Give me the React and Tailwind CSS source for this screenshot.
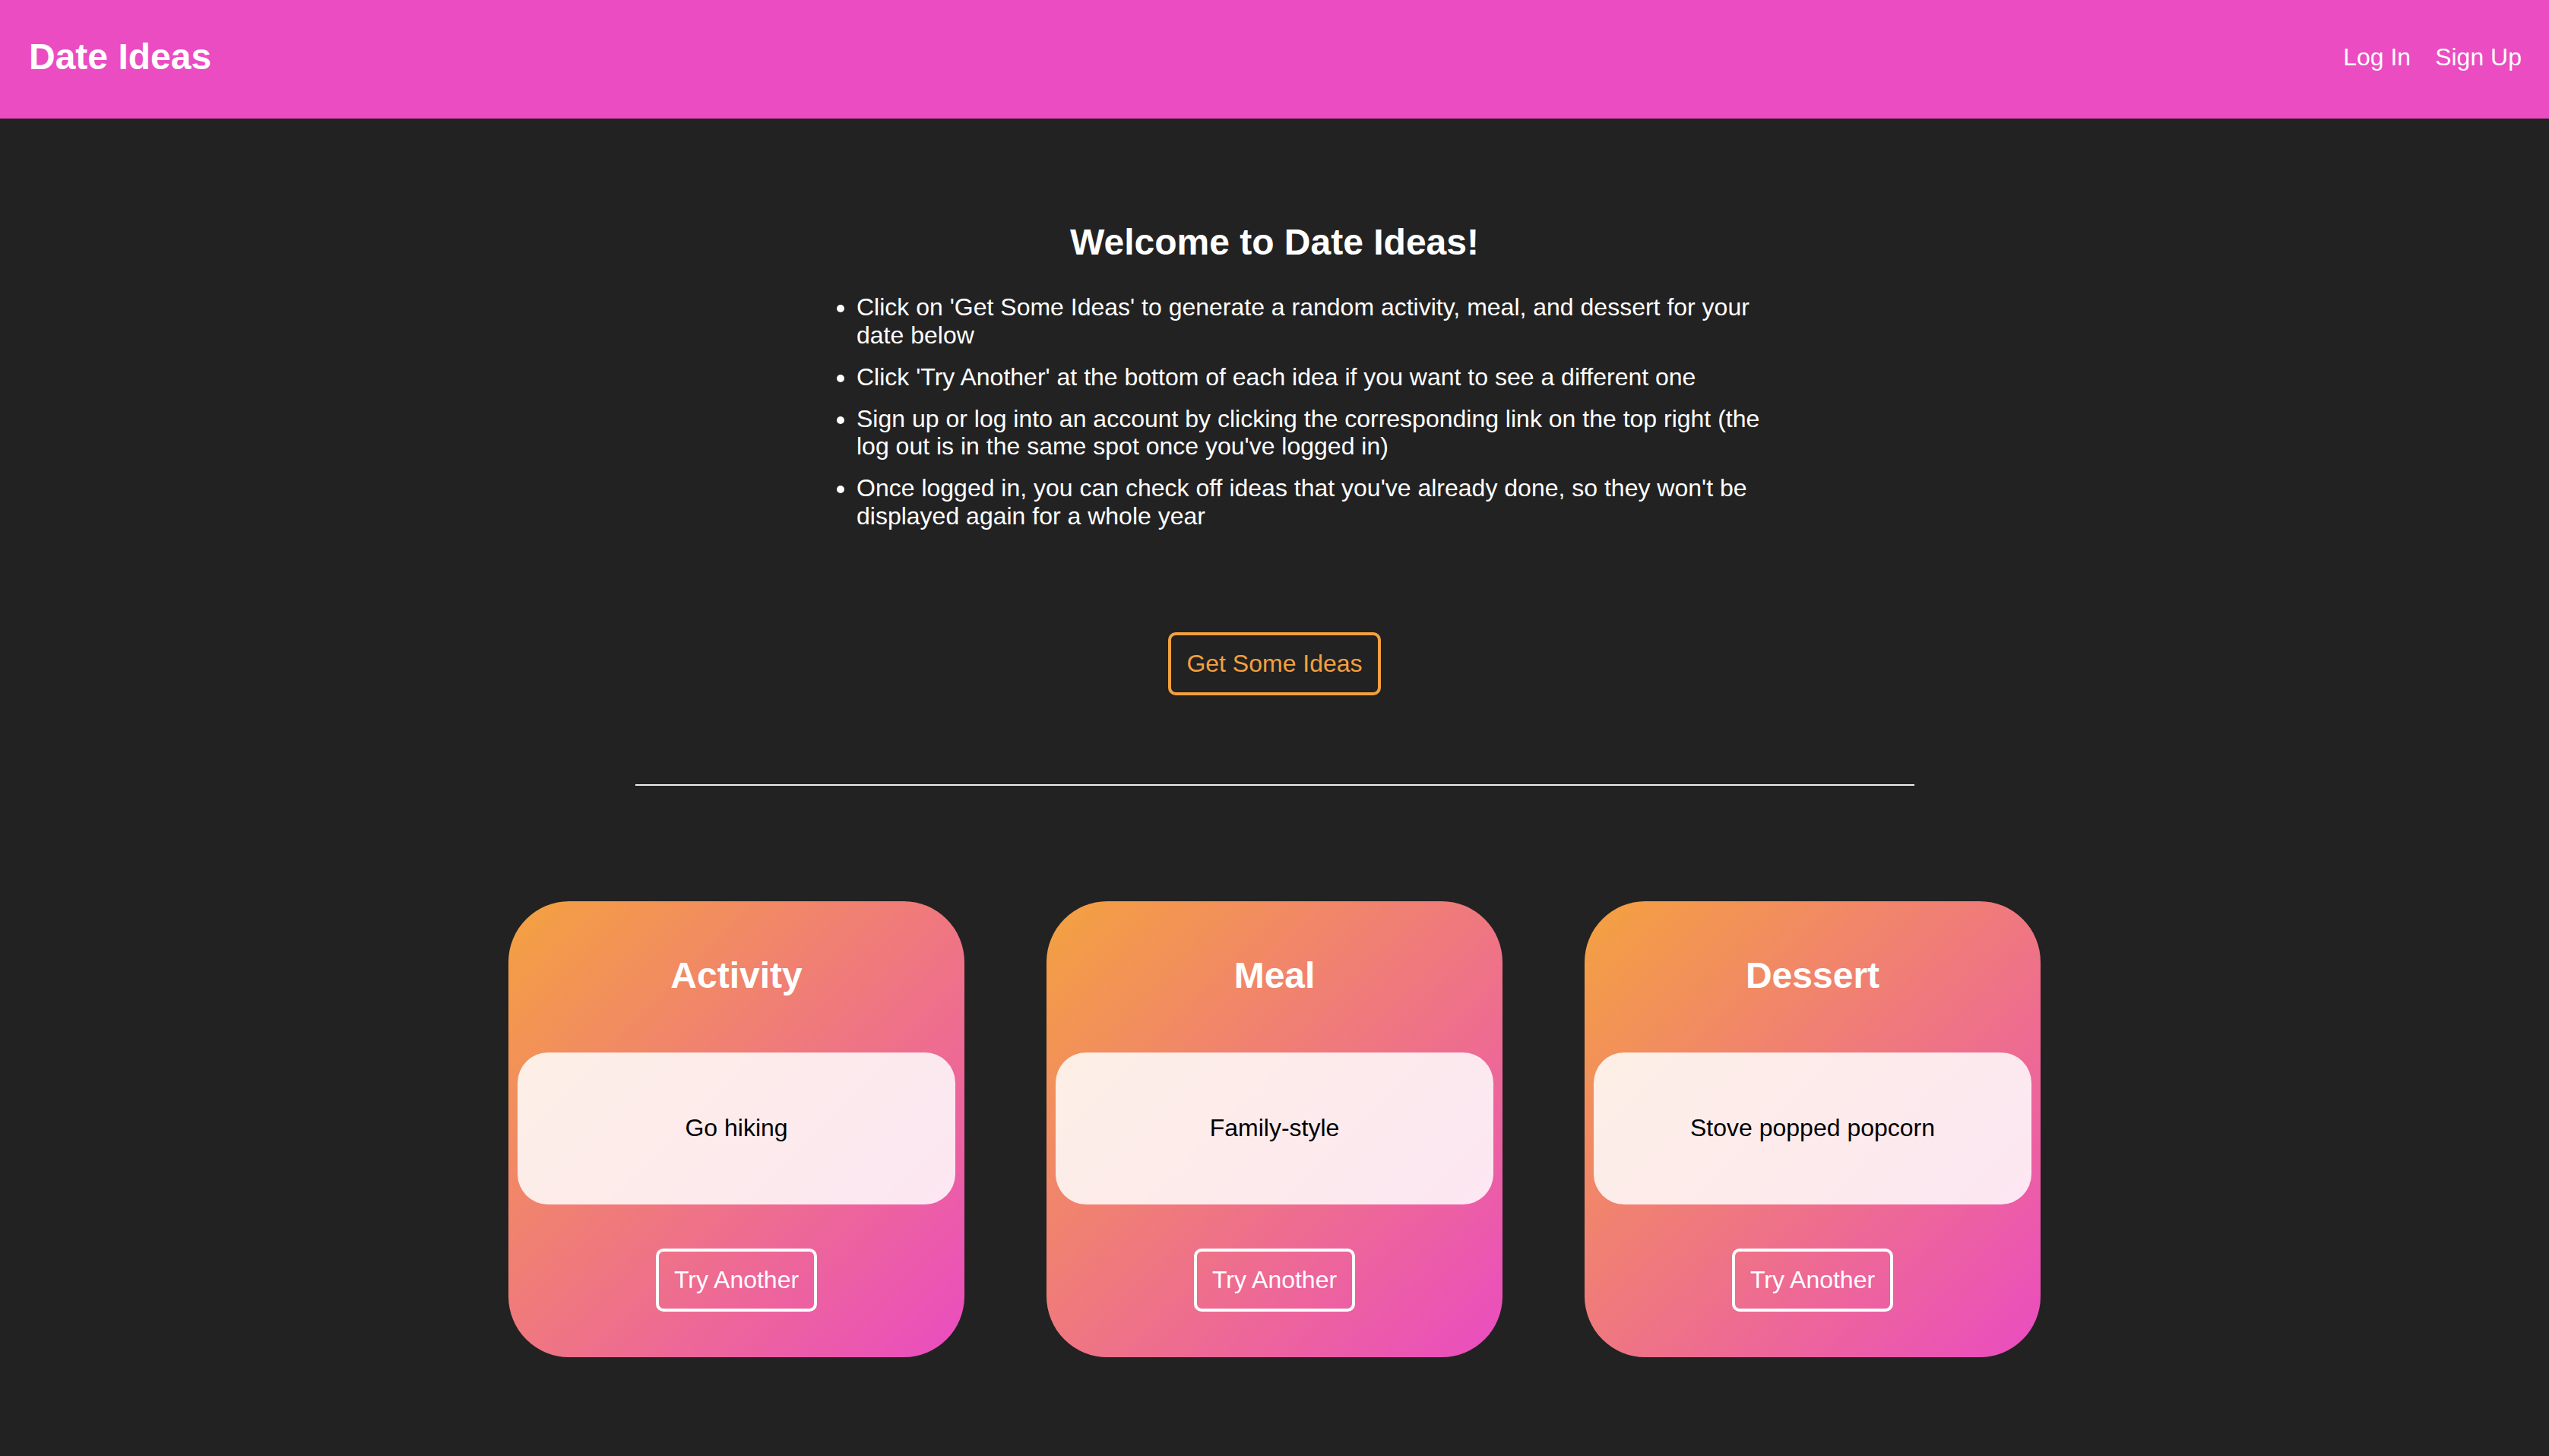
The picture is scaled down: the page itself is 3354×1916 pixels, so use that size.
import React from "react";

const cards = [
  { title: "Activity", idea: "Go hiking" },
  { title: "Meal", idea: "Family-style" },
  { title: "Dessert", idea: "Stove popped popcorn" },
];

export default function App() {
  return (
    <div className="min-h-screen bg-[#222222] font-['Liberation_Sans',Arial,Helvetica,sans-serif] text-white">
      <header className="flex h-[156px] items-center justify-between bg-[#eb4cc2] pb-[6px] pl-[38px] pr-[36px]">
        <h1 className="text-[48px] font-bold leading-[1.15]">Date Ideas</h1>
        <nav className="flex gap-[32px] text-[32px] leading-[1.15]">
          <a href="#">Log In</a>
          <a href="#">Sign Up</a>
        </nav>
      </header>

      <main className="flex flex-col items-center pb-[131px]">
        <h2 className="mt-[135px] text-[48px] font-bold leading-[1.15]">Welcome to Date Ideas!</h2>

        <div className="mt-[40px] w-[1264px] pl-[2px]">
          <ul className="-mr-[32px] list-disc pl-[80px] text-[32px] leading-[1.15]">
            <li className="mb-[18px]">
              Click on 'Get Some Ideas' to generate a random activity, meal, and dessert for your date below
            </li>
            <li className="mb-[18px]">
              Click 'Try Another' at the bottom of each idea if you want to see a different one
            </li>
            <li className="mb-[18px]">
              Sign up or log into an account by clicking the corresponding link on the top right (the log out is in the same spot once you've logged in)
            </li>
            <li>
              Once logged in, you can check off ideas that you've already done, so they won't be displayed again for a whole year
            </li>
          </ul>
        </div>

        <button className="mt-[134px] rounded-[10px] border-[4px] border-[#f3a03f] px-[20px] py-[19px] text-[32px] leading-[1.15] text-[#f3a03f]">
          Get Some Ideas
        </button>

        <hr className="mt-[117px] h-[2px] w-[1683px] border-0 bg-[#eeeeee]" />

        <div className="mt-[152px] flex gap-[108px]">
          {cards.map((c) => (
            <div
              key={c.title}
              className="flex h-[600px] w-[600px] flex-col items-center rounded-[80px] bg-[linear-gradient(135deg,#f4a23f,#ea4cc1)] pt-[70px]"
            >
              <h3 className="text-[48px] font-bold leading-[1.15] text-white">{c.title}</h3>
              <div className="mt-[74px] flex h-[200px] w-[576px] items-center justify-center rounded-[40px] bg-white/85 text-[32px] leading-[1.15] text-black">
                {c.idea}
              </div>
              <button className="mt-[58px] rounded-[10px] border-[4px] border-white px-[20px] py-[19px] text-[32px] leading-[1.15] text-white">
                Try Another
              </button>
            </div>
          ))}
        </div>
      </main>
    </div>
  );
}
